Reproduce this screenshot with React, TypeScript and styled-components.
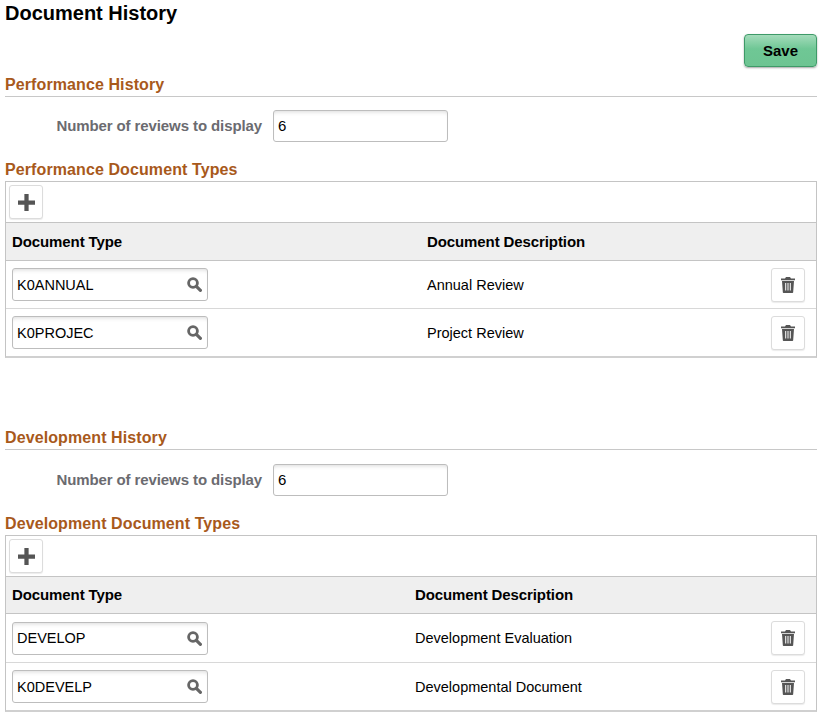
import styled, { createGlobalStyle } from 'styled-components';

const GlobalStyle = createGlobalStyle`
  html, body {
    margin: 0;
    padding: 0;
    background: #fff;
    font-family: "Liberation Sans", Arial, sans-serif;
    color: #000;
  }
`;

function SearchIcon() {
  return (
    <svg width="15" height="15" viewBox="0 0 16 16">
      <circle cx="6.400" cy="6.400" r="4.700" fill="none" stroke="#666" strokeWidth="3" />
      <path d="M10 10l4.300 4.300" stroke="#666" strokeWidth="3.400" strokeLinecap="round" />
    </svg>
  );
}

function PlusIcon() {
  return (
    <svg width="17" height="17" viewBox="0 0 16 16">
      <path d="M6 0h4v6h6v4h-6v6H6v-6H0V6h6z" fill="#555" />
    </svg>
  );
}

function TrashIcon() {
  return (
    <svg width="14" height="16" viewBox="0 0 14 16">
      <path
        d="M5 0h4l1 1.500h4v1.700H0V1.500h4zM1 4h12l-.8 11c0 .6-.5 1-1 1H2.800c-.5 0-1-.4-1-1zM4.200 6v7.500h1V6zm2.300 0v7.500h1V6zm2.300 0v7.500h1V6z"
        fill="#555"
        fillRule="evenodd"
      />
    </svg>
  );
}

type Row = { type: string; description: string };

type SectionProps = {
  heading: string;
  gridHeading: string;
  descLeft: number;
  fieldGap: number;
  headerHeight: number;
  rowHeight: number;
  rows: Row[];
};

function HistorySection({
  heading,
  gridHeading,
  descLeft,
  fieldGap,
  headerHeight,
  rowHeight,
  rows,
}: SectionProps) {
  return (
    <Section>
      <SectionHeading>{heading}</SectionHeading>
      <FieldRow $gap={fieldGap}>
        <FieldLabel>Number of reviews to display</FieldLabel>
        <NumberBox>6</NumberBox>
      </FieldRow>
      <GridHeading>{gridHeading}</GridHeading>
      <Grid>
        <Toolbar>
          <IconButton aria-label="Add row">
            <PlusIcon />
          </IconButton>
        </Toolbar>
        <HeaderRow $descLeft={descLeft} $height={headerHeight}>
          <span>Document Type</span>
          <span>Document Description</span>
        </HeaderRow>
        {rows.map((row) => (
          <DataRow key={row.type} $descLeft={descLeft} $height={rowHeight}>
            <LookupBox>
              {row.type}
              <SearchIcon />
            </LookupBox>
            <span>{row.description}</span>
            <IconButton aria-label="Delete row">
              <TrashIcon />
            </IconButton>
          </DataRow>
        ))}
      </Grid>
    </Section>
  );
}

export default function App() {
  return (
    <Page>
      <GlobalStyle />
      <Title>Document History</Title>
      <ActionBar>
        <SaveButton>Save</SaveButton>
      </ActionBar>
      <HistorySection
        heading="Performance History"
        gridHeading="Performance Document Types"
        descLeft={415}
        fieldGap={13}
        headerHeight={38}
        rowHeight={48}
        rows={[
          { type: 'K0ANNUAL', description: 'Annual Review' },
          { type: 'K0PROJEC', description: 'Project Review' },
        ]}
      />
      <Spacer />
      <HistorySection
        heading="Development History"
        gridHeading="Development Document Types"
        descLeft={403}
        fieldGap={14}
        headerHeight={37}
        rowHeight={49}
        rows={[
          { type: 'DEVELOP', description: 'Development Evaluation' },
          { type: 'K0DEVELP', description: 'Developmental Document' },
        ]}
      />
    </Page>
  );
}

const Page = styled.div`
  width: 825px;
  height: 718px;
  overflow: hidden;
  box-sizing: border-box;
  padding: 0 8px 0 5px;
`;

const Title = styled.h1`
  margin: 0;
  height: 27px;
  font-size: 20px;
  font-weight: 700;
  line-height: 27px;
`;

const ActionBar = styled.div`
  display: flex;
  justify-content: flex-end;
  height: 48px;
  padding-top: 7px;
  box-sizing: border-box;
`;

const SaveButton = styled.button`
  width: 73px;
  height: 33px;
  padding: 0;
  border: 1px solid #3e9a68;
  border-radius: 4px;
  background: linear-gradient(#a4dcbb, #6fc795 45%, #6dc492);
  box-shadow: 0 1px 2px rgba(0, 0, 0, 0.35);
  font-family: inherit;
  font-size: 15px;
  font-weight: 700;
  color: #000;
`;

const Section = styled.section`
  display: flex;
  flex-direction: column;
`;

const SectionHeading = styled.h2`
  margin: 0;
  height: 22px;
  box-sizing: border-box;
  border-bottom: 1px solid #c8c8c8;
  font-size: 16px;
  letter-spacing: 0.1px;
  font-weight: 700;
  line-height: 19px;
  color: #a8591b;
`;

const FieldRow = styled.div<{ $gap: number }>`
  display: flex;
  align-items: center;
  height: 32px;
  margin-top: ${(p) => p.$gap}px;
`;

const FieldLabel = styled.label`
  width: 268px;
  padding: 0 11px 1px 0;
  box-sizing: border-box;
  text-align: right;
  font-size: 15px;
  letter-spacing: -0.1px;
  font-weight: 700;
  color: #6b6b70;
`;

const NumberBox = styled.div`
  width: 175px;
  height: 32px;
  box-sizing: border-box;
  padding-left: 4px;
  border: 1px solid #bdbdbd;
  border-radius: 3px;
  box-shadow: inset 0 4px 4px -3px rgba(0, 0, 0, 0.15);
  font-size: 15px;
  line-height: 30px;
`;

const GridHeading = styled.h3`
  margin: 18px 0 0;
  height: 21px;
  font-size: 16px;
  letter-spacing: 0.1px;
  font-weight: 700;
  line-height: 19px;
  color: #a8591b;
`;

const Grid = styled.div`
  box-sizing: border-box;
  width: 812px;
  border: 1px solid #c4c4c4;
  border-bottom-width: 2px;
  border-bottom-color: #d0d0d0;
`;

const Toolbar = styled.div`
  display: flex;
  align-items: center;
  height: 40px;
  padding-left: 3px;
  border-bottom: 1px solid #c4c4c4;
`;

const IconButton = styled.button`
  display: flex;
  align-items: center;
  justify-content: center;
  width: 34px;
  height: 34px;
  padding: 0;
  border: 1px solid #dcdcdc;
  border-radius: 3px;
  background: #fff;
  box-shadow: 0 1px 1px rgba(0, 0, 0, 0.08);
`;

const HeaderRow = styled.div<{ $descLeft: number; $height: number }>`
  display: grid;
  grid-template-columns: ${(p) => p.$descLeft}px 1fr;
  align-items: center;
  height: ${(p) => p.$height}px;
  padding: 0 0 1px 6px;
  box-sizing: border-box;
  background: #efefef;
  border-bottom: 1px solid #c4c4c4;
  font-size: 15px;
  letter-spacing: -0.1px;
  font-weight: 700;
`;

const DataRow = styled.div<{ $descLeft: number; $height: number }>`
  display: grid;
  grid-template-columns: ${(p) => p.$descLeft}px 1fr 34px;
  align-items: center;
  height: ${(p) => p.$height}px;
  padding: 0 11px 0 6px;
  box-sizing: border-box;
  border-bottom: 1px solid #d8d8d8;
  font-size: 14.5px;
  &:last-child {
    height: 47px;
    border-bottom: 0;
  }
`;

const LookupBox = styled.div`
  display: flex;
  align-items: center;
  justify-content: space-between;
  width: 196px;
  height: 33px;
  box-sizing: border-box;
  padding: 0 5px 0 4px;
  border: 1px solid #bdbdbd;
  border-radius: 3px;
  box-shadow: inset 0 4px 4px -3px rgba(0, 0, 0, 0.15);
`;

const Spacer = styled.div`
  height: 70px;
`;
